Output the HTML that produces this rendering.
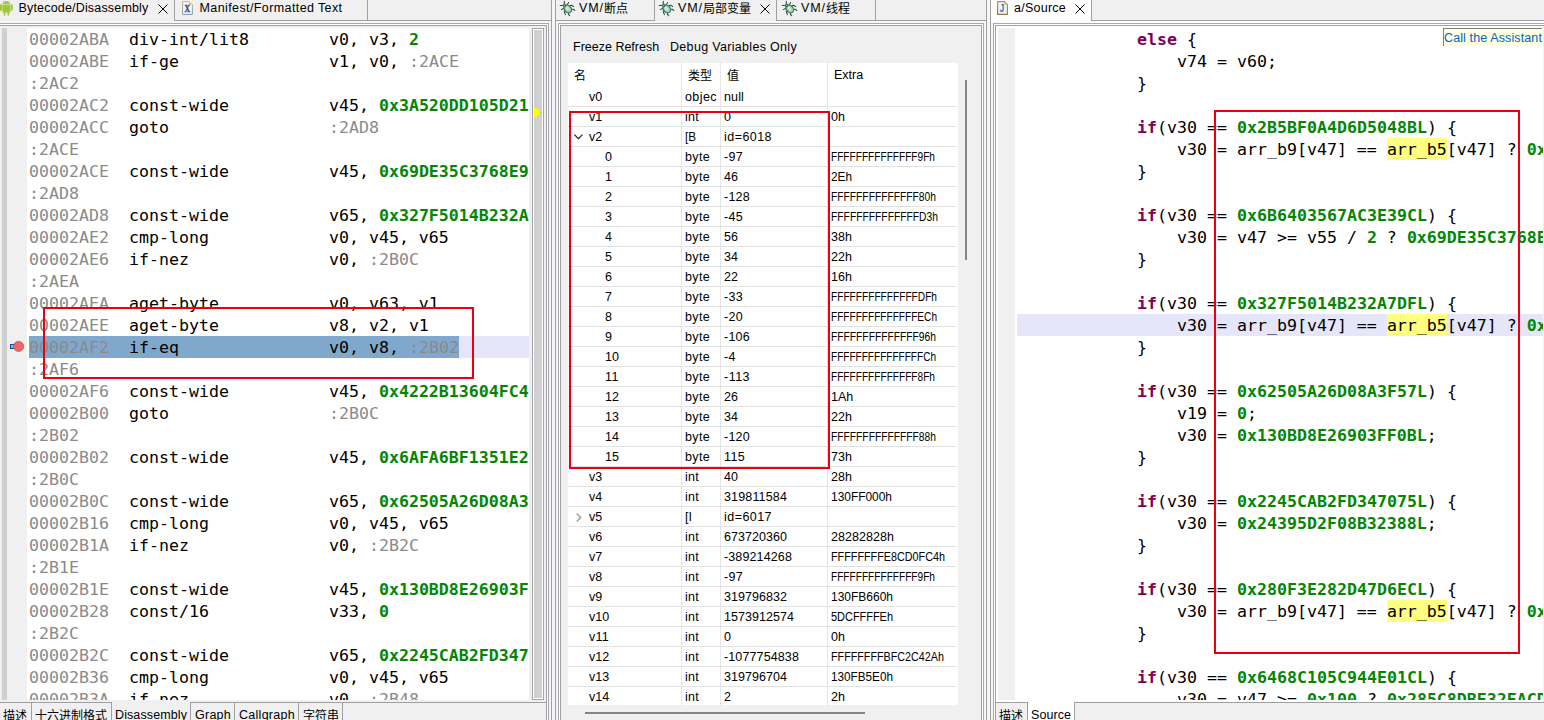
<!DOCTYPE html>
<html><head><meta charset="utf-8"><title>Debugger</title><style>
html,body{margin:0;padding:0}
body{width:1544px;height:720px;overflow:hidden;background:#f0f0f0;position:relative;font-family:"Liberation Sans","Noto Sans CJK SC",sans-serif;font-size:12.5px;color:#000}
div,span{box-sizing:border-box}
.t{position:absolute;white-space:pre;line-height:16px;height:16px}
.code{position:absolute;overflow:hidden;font-family:"DejaVu Sans Mono","Liberation Mono",monospace;font-size:16.6px;letter-spacing:0.006px;white-space:pre}
.ln{position:absolute;left:0;height:22px;line-height:24px;white-space:pre}
.ln span{display:inline-block;height:22px;vertical-align:top}
.cj{font-size:12px;position:relative;top:0.6px}
.g{color:#8a8a8a}
.n{color:#038603;font-weight:bold}
.k{color:#7f0055;font-weight:bold}
.y{background:#ffff80}
.cell{position:absolute;white-space:pre;line-height:20px;height:20px}
</style></head><body>
<div style="position:absolute;left:549px;top:21px;width:9px;height:699px;background:#f5f5f5;"></div>
<div style="position:absolute;left:552px;top:0px;width:3px;height:720px;background:#f5f5f5;"></div>
<div style="position:absolute;left:551px;top:0px;width:1px;height:720px;background:#a0a0a0;"></div>
<div style="position:absolute;left:555px;top:0px;width:1px;height:720px;background:#a0a0a0;"></div>
<div style="position:absolute;left:984px;top:21px;width:9px;height:699px;background:#f5f5f5;"></div>
<div style="position:absolute;left:987px;top:0px;width:3px;height:720px;background:#f5f5f5;"></div>
<div style="position:absolute;left:986px;top:0px;width:1px;height:720px;background:#a0a0a0;"></div>
<div style="position:absolute;left:990px;top:0px;width:1px;height:720px;background:#a0a0a0;"></div>
<div style="position:absolute;left:174px;top:0px;width:1px;height:21px;background:#a0a0a0;"></div>
<div style="position:absolute;left:367px;top:0px;width:1px;height:21px;background:#a0a0a0;"></div>
<div style="position:absolute;left:174px;top:20px;width:377px;height:1px;background:#a0a0a0;"></div>
<div style="position:absolute;left:0px;top:21px;width:551px;height:2px;background:#f6f6f6;"></div>
<div style="position:absolute;left:0px;top:23px;width:549px;height:1px;background:#a7a9b1;"></div>
<div style="position:absolute;left:548px;top:23px;width:1px;height:697px;background:#a7a9b1;"></div>
<div style="position:absolute;left:0px;top:24px;width:548px;height:1px;background:#fff;"></div>
<div style="position:absolute;left:547px;top:24px;width:1px;height:696px;background:#fff;"></div>
<div style="position:absolute;left:0px;top:25px;width:547px;height:1px;background:#a0a0a0;"></div>
<div style="position:absolute;left:546px;top:25px;width:1px;height:695px;background:#a0a0a0;"></div>
<div style="position:absolute;left:2px;top:28px;width:5px;height:672px;background:#d0d0d0;"></div>
<div style="position:absolute;left:27px;top:28px;width:502px;height:672px;background:#fff;"></div>
<div style="position:absolute;left:532px;top:28px;width:12px;height:672px;background:#fff;border:1px solid #a3a3ab"></div>
<div style="position:absolute;left:534px;top:30px;width:8px;height:668px;background:#d0d0d0;"></div>
<svg style="position:absolute;left:534px;top:108px" width="8" height="9" viewBox="0 0 8 9"><polygon points="0,0 2,0 7.5,4.5 2,9 0,9" fill="#ffff00"/><rect x="6" y="4" width="1" height="1" fill="#40e020"/></svg>
<div style="position:absolute;left:0px;top:702px;width:112px;height:1px;background:#a0a0a0;"></div>
<div style="position:absolute;left:190px;top:702px;width:357px;height:1px;background:#a0a0a0;"></div>
<div style="position:absolute;left:31px;top:702px;width:1px;height:18px;background:#a0a0a0;"></div>
<div style="position:absolute;left:111px;top:702px;width:1px;height:18px;background:#a0a0a0;"></div>
<div style="position:absolute;left:190px;top:702px;width:1px;height:18px;background:#a0a0a0;"></div>
<div style="position:absolute;left:234px;top:702px;width:1px;height:18px;background:#a0a0a0;"></div>
<div style="position:absolute;left:298px;top:702px;width:1px;height:18px;background:#a0a0a0;"></div>
<div style="position:absolute;left:342px;top:702px;width:1px;height:18px;background:#a0a0a0;"></div>
<div style="position:absolute;left:654px;top:0px;width:1px;height:21px;background:#a0a0a0;"></div>
<div style="position:absolute;left:776px;top:0px;width:1px;height:21px;background:#a0a0a0;"></div>
<div style="position:absolute;left:875px;top:0px;width:1px;height:21px;background:#a0a0a0;"></div>
<div style="position:absolute;left:556px;top:20px;width:99px;height:1px;background:#a0a0a0;"></div>
<div style="position:absolute;left:776px;top:20px;width:210px;height:1px;background:#a0a0a0;"></div>
<div style="position:absolute;left:556px;top:21px;width:430px;height:2px;background:#f6f6f6;"></div>
<div style="position:absolute;left:558px;top:23px;width:426px;height:1px;background:#a7a9b1;"></div>
<div style="position:absolute;left:558px;top:23px;width:1px;height:697px;background:#a7a9b1;"></div>
<div style="position:absolute;left:983px;top:23px;width:1px;height:697px;background:#a7a9b1;"></div>
<div style="position:absolute;left:559px;top:24px;width:424px;height:1px;background:#fff;"></div>
<div style="position:absolute;left:559px;top:24px;width:1px;height:696px;background:#fff;"></div>
<div style="position:absolute;left:982px;top:24px;width:1px;height:696px;background:#fff;"></div>
<div style="position:absolute;left:560px;top:25px;width:422px;height:1px;background:#a0a0a0;"></div>
<div style="position:absolute;left:560px;top:25px;width:1px;height:695px;background:#a0a0a0;"></div>
<div style="position:absolute;left:981px;top:25px;width:1px;height:695px;background:#a0a0a0;"></div>
<div style="position:absolute;left:568px;top:63px;width:390px;height:642px;background:#fff;"></div>
<div style="position:absolute;left:681px;top:63px;width:1px;height:642px;background:#e6e6e6;"></div>
<div style="position:absolute;left:720px;top:63px;width:1px;height:642px;background:#e6e6e6;"></div>
<div style="position:absolute;left:827px;top:63px;width:1px;height:642px;background:#e6e6e6;"></div>
<div style="position:absolute;left:568px;top:106px;width:389px;height:1px;background:#e3e3e3;"></div>
<div style="position:absolute;left:568px;top:126px;width:389px;height:1px;background:#e3e3e3;"></div>
<div style="position:absolute;left:568px;top:146px;width:389px;height:1px;background:#e3e3e3;"></div>
<div style="position:absolute;left:568px;top:166px;width:389px;height:1px;background:#e3e3e3;"></div>
<div style="position:absolute;left:568px;top:186px;width:389px;height:1px;background:#e3e3e3;"></div>
<div style="position:absolute;left:568px;top:206px;width:389px;height:1px;background:#e3e3e3;"></div>
<div style="position:absolute;left:568px;top:226px;width:389px;height:1px;background:#e3e3e3;"></div>
<div style="position:absolute;left:568px;top:246px;width:389px;height:1px;background:#e3e3e3;"></div>
<div style="position:absolute;left:568px;top:266px;width:389px;height:1px;background:#e3e3e3;"></div>
<div style="position:absolute;left:568px;top:286px;width:389px;height:1px;background:#e3e3e3;"></div>
<div style="position:absolute;left:568px;top:306px;width:389px;height:1px;background:#e3e3e3;"></div>
<div style="position:absolute;left:568px;top:326px;width:389px;height:1px;background:#e3e3e3;"></div>
<div style="position:absolute;left:568px;top:346px;width:389px;height:1px;background:#e3e3e3;"></div>
<div style="position:absolute;left:568px;top:366px;width:389px;height:1px;background:#e3e3e3;"></div>
<div style="position:absolute;left:568px;top:386px;width:389px;height:1px;background:#e3e3e3;"></div>
<div style="position:absolute;left:568px;top:406px;width:389px;height:1px;background:#e3e3e3;"></div>
<div style="position:absolute;left:568px;top:426px;width:389px;height:1px;background:#e3e3e3;"></div>
<div style="position:absolute;left:568px;top:446px;width:389px;height:1px;background:#e3e3e3;"></div>
<div style="position:absolute;left:568px;top:466px;width:389px;height:1px;background:#e3e3e3;"></div>
<div style="position:absolute;left:568px;top:486px;width:389px;height:1px;background:#e3e3e3;"></div>
<div style="position:absolute;left:568px;top:506px;width:389px;height:1px;background:#e3e3e3;"></div>
<div style="position:absolute;left:568px;top:526px;width:389px;height:1px;background:#e3e3e3;"></div>
<div style="position:absolute;left:568px;top:546px;width:389px;height:1px;background:#e3e3e3;"></div>
<div style="position:absolute;left:568px;top:566px;width:389px;height:1px;background:#e3e3e3;"></div>
<div style="position:absolute;left:568px;top:586px;width:389px;height:1px;background:#e3e3e3;"></div>
<div style="position:absolute;left:568px;top:606px;width:389px;height:1px;background:#e3e3e3;"></div>
<div style="position:absolute;left:568px;top:626px;width:389px;height:1px;background:#e3e3e3;"></div>
<div style="position:absolute;left:568px;top:646px;width:389px;height:1px;background:#e3e3e3;"></div>
<div style="position:absolute;left:568px;top:666px;width:389px;height:1px;background:#e3e3e3;"></div>
<div style="position:absolute;left:568px;top:686px;width:389px;height:1px;background:#e3e3e3;"></div>
<div style="position:absolute;left:965px;top:80px;width:2px;height:180px;background:#858585;"></div>
<div style="position:absolute;left:585px;top:712px;width:280px;height:2px;background:#858585;"></div>
<div style="position:absolute;left:991px;top:0px;width:100px;height:23px;background:#fff;"></div>
<div style="position:absolute;left:1091px;top:0px;width:1px;height:21px;background:#a0a0a0;"></div>
<div style="position:absolute;left:1091px;top:20px;width:453px;height:1px;background:#a0a0a0;"></div>
<div style="position:absolute;left:991px;top:21px;width:553px;height:2px;background:#fff;"></div>
<div style="position:absolute;left:993px;top:23px;width:551px;height:1px;background:#a7a9b1;"></div>
<div style="position:absolute;left:993px;top:23px;width:1px;height:697px;background:#a7a9b1;"></div>
<div style="position:absolute;left:994px;top:24px;width:550px;height:1px;background:#fff;"></div>
<div style="position:absolute;left:994px;top:24px;width:1px;height:696px;background:#fff;"></div>
<div style="position:absolute;left:995px;top:25px;width:549px;height:1px;background:#a0a0a0;"></div>
<div style="position:absolute;left:995px;top:25px;width:1px;height:695px;background:#a0a0a0;"></div>
<div style="position:absolute;left:996px;top:26px;width:547px;height:676px;background:#fff;"></div>
<div style="position:absolute;left:1543px;top:26px;width:1px;height:676px;background:#f2f2f2;"></div>
<div style="position:absolute;left:998px;top:28px;width:17px;height:672px;background:#f0f0f0;"></div>
<div style="position:absolute;left:995px;top:702px;width:33px;height:1px;background:#a0a0a0;"></div>
<div style="position:absolute;left:1027px;top:702px;width:1px;height:18px;background:#a0a0a0;"></div>
<div style="position:absolute;left:1028px;top:702px;width:46px;height:18px;background:#fff;"></div>
<div style="position:absolute;left:1074px;top:702px;width:1px;height:18px;background:#a0a0a0;"></div>
<div style="position:absolute;left:1074px;top:702px;width:470px;height:1px;background:#a0a0a0;"></div>
<div class="code" style="left:29px;top:28px;width:500px;height:672px">
<div class="ln" style="top:0px"><span class="g">00002ABA  </span><span>div-int/lit8        </span><span>v0, v3, </span><span class="n">2</span></div>
<div class="ln" style="top:22px"><span class="g">00002ABE  </span><span>if-ge               </span><span>v1, v0, </span><span class="g">:2ACE</span></div>
<div class="ln" style="top:44px"><span class="g">:2AC2</span></div>
<div class="ln" style="top:66px"><span class="g">00002AC2  </span><span>const-wide          </span><span>v45, </span><span class="n">0x3A520DD105D21</span></div>
<div class="ln" style="top:88px"><span class="g">00002ACC  </span><span>goto                </span><span class="g">:2AD8</span></div>
<div class="ln" style="top:110px"><span class="g">:2ACE</span></div>
<div class="ln" style="top:132px"><span class="g">00002ACE  </span><span>const-wide          </span><span>v45, </span><span class="n">0x69DE35C3768E9</span></div>
<div class="ln" style="top:154px"><span class="g">:2AD8</span></div>
<div class="ln" style="top:176px"><span class="g">00002AD8  </span><span>const-wide          </span><span>v65, </span><span class="n">0x327F5014B232A</span></div>
<div class="ln" style="top:198px"><span class="g">00002AE2  </span><span>cmp-long            </span><span>v0, v45, v65</span></div>
<div class="ln" style="top:220px"><span class="g">00002AE6  </span><span>if-nez              </span><span>v0, </span><span class="g">:2B0C</span></div>
<div class="ln" style="top:242px"><span class="g">:2AEA</span></div>
<div class="ln" style="top:264px"><span class="g">00002AEA  </span><span>aget-byte           </span><span>v0, v63, v1</span></div>
<div class="ln" style="top:286px"><span class="g">00002AEE  </span><span>aget-byte           </span><span>v8, v2, v1</span></div>
<div style="position:absolute;left:0;top:308px;width:430px;height:22px;background:#80a8cc"></div>
<div style="position:absolute;left:430px;top:308px;width:70px;height:22px;background:#e6e6fa"></div>
<div class="ln" style="top:308px"><span class="g">00002AF2  </span><span>if-eq               </span><span>v0, v8, </span><span class="g">:2B02</span></div>
<div class="ln" style="top:330px"><span class="g">:2AF6</span></div>
<div class="ln" style="top:352px"><span class="g">00002AF6  </span><span>const-wide          </span><span>v45, </span><span class="n">0x4222B13604FC4</span></div>
<div class="ln" style="top:374px"><span class="g">00002B00  </span><span>goto                </span><span class="g">:2B0C</span></div>
<div class="ln" style="top:396px"><span class="g">:2B02</span></div>
<div class="ln" style="top:418px"><span class="g">00002B02  </span><span>const-wide          </span><span>v45, </span><span class="n">0x6AFA6BF1351E2</span></div>
<div class="ln" style="top:440px"><span class="g">:2B0C</span></div>
<div class="ln" style="top:462px"><span class="g">00002B0C  </span><span>const-wide          </span><span>v65, </span><span class="n">0x62505A26D08A3</span></div>
<div class="ln" style="top:484px"><span class="g">00002B16  </span><span>cmp-long            </span><span>v0, v45, v65</span></div>
<div class="ln" style="top:506px"><span class="g">00002B1A  </span><span>if-nez              </span><span>v0, </span><span class="g">:2B2C</span></div>
<div class="ln" style="top:528px"><span class="g">:2B1E</span></div>
<div class="ln" style="top:550px"><span class="g">00002B1E  </span><span>const-wide          </span><span>v45, </span><span class="n">0x130BD8E26903F</span></div>
<div class="ln" style="top:572px"><span class="g">00002B28  </span><span>const/16            </span><span>v33, </span><span class="n">0</span></div>
<div class="ln" style="top:594px"><span class="g">:2B2C</span></div>
<div class="ln" style="top:616px"><span class="g">00002B2C  </span><span>const-wide          </span><span>v65, </span><span class="n">0x2245CAB2FD347</span></div>
<div class="ln" style="top:638px"><span class="g">00002B36  </span><span>cmp-long            </span><span>v0, v45, v65</span></div>
<div class="ln" style="top:660px"><span class="g">00002B3A  </span><span>if-nez              </span><span>v0, </span><span class="g">:2B48</span></div>
</div>
<svg style="position:absolute;left:9px;top:340px" width="17" height="14" viewBox="0 0 17 14"><rect x="1.5" y="4.5" width="4" height="4" fill="#8ab4d8" stroke="#0b4f99" stroke-width="1"/><circle cx="9.6" cy="6.4" r="5.0" fill="#e8686c" stroke="#d8434c" stroke-width="0.8"/></svg>
<div class="code" style="left:1017px;top:28px;width:526px;height:672px">
<div class="ln" style="top:0px"><span>            </span><span class="k">else</span><span> {</span></div>
<div class="ln" style="top:22px"><span>                v74 = v60;</span></div>
<div class="ln" style="top:44px"><span>            }</span></div>
<div class="ln" style="top:66px"></div>
<div class="ln" style="top:88px"><span>            </span><span class="k">if</span><span>(v30 == </span><span class="n">0x2B5BF0A4D6D5048BL</span><span>) {</span></div>
<div class="ln" style="top:110px"><span>                v30 = arr_b9[v47] == </span><span class="y">arr_b5</span><span>[v47] ? </span><span class="n">0x2245CAB2FD347075L</span></div>
<div class="ln" style="top:132px"><span>            }</span></div>
<div class="ln" style="top:154px"></div>
<div class="ln" style="top:176px"><span>            </span><span class="k">if</span><span>(v30 == </span><span class="n">0x6B6403567AC3E39CL</span><span>) {</span></div>
<div class="ln" style="top:198px"><span>                v30 = v47 &gt;= v55 / </span><span class="n">2</span><span> ? </span><span class="n">0x69DE35C3768E9B1BL</span></div>
<div class="ln" style="top:220px"><span>            }</span></div>
<div class="ln" style="top:242px"></div>
<div class="ln" style="top:264px"><span>            </span><span class="k">if</span><span>(v30 == </span><span class="n">0x327F5014B232A7DFL</span><span>) {</span></div>
<div style="position:absolute;left:0;top:286px;width:526px;height:22px;background:#e6e6fa"></div>
<div class="ln" style="top:286px"><span>                v30 = arr_b9[v47] == </span><span class="y">arr_b5</span><span>[v47] ? </span><span class="n">0x2245CAB2FD347075L</span></div>
<div class="ln" style="top:308px"><span>            }</span></div>
<div class="ln" style="top:330px"></div>
<div class="ln" style="top:352px"><span>            </span><span class="k">if</span><span>(v30 == </span><span class="n">0x62505A26D08A3F57L</span><span>) {</span></div>
<div class="ln" style="top:374px"><span>                v19 = </span><span class="n">0</span><span>;</span></div>
<div class="ln" style="top:396px"><span>                v30 = </span><span class="n">0x130BD8E26903FF0BL</span><span>;</span></div>
<div class="ln" style="top:418px"><span>            }</span></div>
<div class="ln" style="top:440px"></div>
<div class="ln" style="top:462px"><span>            </span><span class="k">if</span><span>(v30 == </span><span class="n">0x2245CAB2FD347075L</span><span>) {</span></div>
<div class="ln" style="top:484px"><span>                v30 = </span><span class="n">0x24395D2F08B32388L</span><span>;</span></div>
<div class="ln" style="top:506px"><span>            }</span></div>
<div class="ln" style="top:528px"></div>
<div class="ln" style="top:550px"><span>            </span><span class="k">if</span><span>(v30 == </span><span class="n">0x280F3E282D47D6ECL</span><span>) {</span></div>
<div class="ln" style="top:572px"><span>                v30 = arr_b9[v47] == </span><span class="y">arr_b5</span><span>[v47] ? </span><span class="n">0x2245CAB2FD347075L</span></div>
<div class="ln" style="top:594px"><span>            }</span></div>
<div class="ln" style="top:616px"></div>
<div class="ln" style="top:638px"><span>            </span><span class="k">if</span><span>(v30 == </span><span class="n">0x6468C105C944E01CL</span><span>) {</span></div>
<div class="ln" style="top:660px"><span>                v30 = v47 &gt;= </span><span class="n">0x100</span><span> ? </span><span class="n">0x285C8DBE32EACD6AL</span></div>
</div>
<div style="position:absolute;left:1443px;top:28px;width:99px;height:18px;background:#ffffe1;border-left:1px solid #808080;border-top:1px solid #808080"></div>
<div class="t" style="left:1444px;top:30px;letter-spacing:0.117px;color:#0563c9;">Call the Assistant</div>
<div style="position:absolute;left:43px;top:307px;width:431px;height:72px;border:2px solid #ea0010;z-index:5"></div>
<div style="position:absolute;left:569px;top:111px;width:261px;height:358px;border:2px solid #ea0010;z-index:5"></div>
<div style="position:absolute;left:1214px;top:110px;width:306px;height:544px;border:2px solid #ea0010;z-index:5"></div>
<div class="t" style="left:18.5px;top:0px;letter-spacing:0.177px;">Bytecode/Disassembly</div>
<div class="t" style="left:199.5px;top:0px;letter-spacing:0.397px;">Manifest/Formatted Text</div>
<div class="t" style="left:579px;top:0px;"><span style="letter-spacing:0.922px;">VM/</span><span class="cj">断点</span></div>
<div class="t" style="left:678px;top:0px;"><span style="letter-spacing:0.922px;">VM/</span><span class="cj">局部变量</span></div>
<div class="t" style="left:801px;top:0px;"><span style="letter-spacing:0.922px;">VM/</span><span class="cj">线程</span></div>
<div class="t" style="left:1014px;top:0px;letter-spacing:0.246px;">a/Source</div>
<svg style="position:absolute;left:158px;top:4px" width="10" height="10" viewBox="0 0 10 10"><path d="M0.5 0.5 L9.5 9.5 M9.5 0.5 L0.5 9.5" stroke="#000" stroke-width="1" fill="none"/></svg>
<svg style="position:absolute;left:760px;top:4px" width="10" height="10" viewBox="0 0 10 10"><path d="M0.5 0.5 L9.5 9.5 M9.5 0.5 L0.5 9.5" stroke="#000" stroke-width="1" fill="none"/></svg>
<svg style="position:absolute;left:1075px;top:4px" width="10" height="10" viewBox="0 0 10 10"><path d="M0.5 0.5 L9.5 9.5 M9.5 0.5 L0.5 9.5" stroke="#000" stroke-width="1" fill="none"/></svg>
<div class="t" style="left:3px;top:707px;"><span class="cj">描述</span></div>
<div class="t" style="left:35px;top:707px;"><span class="cj">十六进制格式</span></div>
<div class="t" style="left:115px;top:707px;letter-spacing:0.104px;">Disassembly</div>
<div class="t" style="left:195px;top:707px;letter-spacing:0.250px;">Graph</div>
<div class="t" style="left:239px;top:707px;letter-spacing:0.276px;">Callgraph</div>
<div class="t" style="left:303px;top:707px;"><span class="cj">字符串</span></div>
<div class="t" style="left:999px;top:707px;"><span class="cj">描述</span></div>
<div class="t" style="left:1031px;top:707px;letter-spacing:0.065px;">Source</div>
<div class="t" style="left:573px;top:39px;">Freeze Refresh</div>
<div class="t" style="left:670px;top:39px;letter-spacing:0.316px;">Debug Variables Only</div>
<svg style="position:absolute;left:0;top:0" width="14" height="17" viewBox="0 0 14 17">
<g fill="#a4c639"><path d="M2.5 4.35 A3.9 3.45 0 0 1 10.3 4.35 Z"/><path d="M2.4 4.8 H10.4 V11.6 A0.9 0.9 0 0 1 9.5 12.5 H3.3 A0.9 0.9 0 0 1 2.4 11.6 Z"/>
<rect x="-1" y="4.3" width="3.05" height="6.45" rx="0.95"/><rect x="10.75" y="4.2" width="2" height="6.55" rx="0.95"/>
<rect x="3.75" y="11.5" width="1.65" height="4.25" rx="0.8"/><rect x="7.5" y="11.5" width="1.65" height="4.25" rx="0.8"/>
<path d="M3.3 0.1 L4 1.4 M9.5 0.1 L8.8 1.4" stroke="#a4c639" stroke-width="0.35" stroke-opacity="0.6"/></g>
<circle cx="4.5" cy="2.6" r="0.45" fill="#e4efc0"/><circle cx="8.4" cy="2.6" r="0.45" fill="#e4efc0"/></svg>
<svg style="position:absolute;left:182px;top:1px" width="12" height="15" viewBox="0 0 12 15">
<defs><linearGradient id="mg" x1="0" y1="0" x2="0" y2="1"><stop offset="0" stop-color="#c9b97c"/><stop offset="1" stop-color="#8696b8"/></linearGradient></defs>
<path d="M0.6 0.6 H7.2 L10.4 3.8 V13.4 H0.6 Z" fill="#f3f6fd" stroke="url(#mg)" stroke-width="1"/>
<path d="M7.2 0.9 L10.1 3.8 H7.2 Z" fill="#e2bc66"/>
<text x="2.6" y="10.8" font-family="Liberation Serif,serif" font-weight="bold" font-size="10" textLength="5.6" lengthAdjust="spacingAndGlyphs" fill="#2a4a72" stroke="#2a4a72" stroke-width="0.3">X</text></svg>
<svg style="position:absolute;left:997px;top:1px" width="12" height="15" viewBox="0 0 12 15">
<defs><linearGradient id="jg" x1="0" y1="0" x2="0" y2="1"><stop offset="0" stop-color="#b8922f"/><stop offset="1" stop-color="#8d7a38"/></linearGradient></defs>
<path d="M0.6 0.6 H7.4 L10.4 3.6 V13.4 H0.6 Z" fill="#eef3fb" stroke="url(#jg)" stroke-width="1.1"/>
<path d="M7.4 0.9 L10.1 3.6 H7.4 Z" fill="#e0b860"/>
<text x="2.7" y="10.9" font-family="Liberation Sans,sans-serif" font-weight="bold" font-size="10.5" textLength="4.4" lengthAdjust="spacingAndGlyphs" fill="#2e6da4">J</text></svg>
<svg style="position:absolute;left:556px;top:0px" width="20" height="17" viewBox="0 0 20 17">
<g stroke="#2d4d3d" stroke-width="1.05" fill="none" stroke-linecap="round"><path d="M8.3 4.6 V1.2 M11.4 4.7 L12.6 2.5 M7 5.4 H4.2 M7.8 8.3 L5.3 9.6 M13.9 5.4 L15.6 5.3 L17.6 6.5 M16 9.3 L17.4 9.3 L18.8 10.5 M8.3 11.1 L8.6 12.8 L9.5 14.6 M12.5 13 V14.5 L13.7 15.6"/></g>
<ellipse cx="11.7" cy="8.9" rx="3.3" ry="4.4" transform="rotate(-42 11.7 8.9)" fill="#a9d494" stroke="#2a6a80" stroke-width="1.1"/>
<ellipse cx="11.2" cy="8.2" rx="1.5" ry="2.6" transform="rotate(-42 11.2 8.2)" fill="#d4ecc4"/>
<circle cx="8.7" cy="5.5" r="1.5" fill="#3c8a50" stroke="#2a6a80" stroke-width="0.9"/>
<circle cx="8.4" cy="5.2" r="0.5" fill="#bfe6b0"/></svg>
<svg style="position:absolute;left:655px;top:0px" width="20" height="17" viewBox="0 0 20 17">
<g stroke="#2d4d3d" stroke-width="1.05" fill="none" stroke-linecap="round"><path d="M8.3 4.6 V1.2 M11.4 4.7 L12.6 2.5 M7 5.4 H4.2 M7.8 8.3 L5.3 9.6 M13.9 5.4 L15.6 5.3 L17.6 6.5 M16 9.3 L17.4 9.3 L18.8 10.5 M8.3 11.1 L8.6 12.8 L9.5 14.6 M12.5 13 V14.5 L13.7 15.6"/></g>
<ellipse cx="11.7" cy="8.9" rx="3.3" ry="4.4" transform="rotate(-42 11.7 8.9)" fill="#a9d494" stroke="#2a6a80" stroke-width="1.1"/>
<ellipse cx="11.2" cy="8.2" rx="1.5" ry="2.6" transform="rotate(-42 11.2 8.2)" fill="#d4ecc4"/>
<circle cx="8.7" cy="5.5" r="1.5" fill="#3c8a50" stroke="#2a6a80" stroke-width="0.9"/>
<circle cx="8.4" cy="5.2" r="0.5" fill="#bfe6b0"/></svg>
<svg style="position:absolute;left:778px;top:0px" width="20" height="17" viewBox="0 0 20 17">
<g stroke="#2d4d3d" stroke-width="1.05" fill="none" stroke-linecap="round"><path d="M8.3 4.6 V1.2 M11.4 4.7 L12.6 2.5 M7 5.4 H4.2 M7.8 8.3 L5.3 9.6 M13.9 5.4 L15.6 5.3 L17.6 6.5 M16 9.3 L17.4 9.3 L18.8 10.5 M8.3 11.1 L8.6 12.8 L9.5 14.6 M12.5 13 V14.5 L13.7 15.6"/></g>
<ellipse cx="11.7" cy="8.9" rx="3.3" ry="4.4" transform="rotate(-42 11.7 8.9)" fill="#a9d494" stroke="#2a6a80" stroke-width="1.1"/>
<ellipse cx="11.2" cy="8.2" rx="1.5" ry="2.6" transform="rotate(-42 11.2 8.2)" fill="#d4ecc4"/>
<circle cx="8.7" cy="5.5" r="1.5" fill="#3c8a50" stroke="#2a6a80" stroke-width="0.9"/>
<circle cx="8.4" cy="5.2" r="0.5" fill="#bfe6b0"/></svg>
<div class="cell" style="left:574px;top:65px;"><span class="cj">名</span></div>
<div class="cell" style="left:688px;top:65px;"><span class="cj">类型</span></div>
<div class="cell" style="left:727px;top:65px;"><span class="cj">值</span></div>
<div class="cell" style="left:834px;top:65px;">Extra</div>
<div class="cell" style="left:589px;top:87px;">v0</div>
<div class="cell" style="left:685px;top:87px;letter-spacing:0.422px;">objec</div>
<div class="cell" style="left:724px;top:87px;letter-spacing:0.133px;">null</div>
<div class="cell" style="left:589px;top:107px;">v1</div>
<div class="cell" style="left:685px;top:107px;letter-spacing:0.266px;">int</div>
<div class="cell" style="left:724px;top:107px;">0</div>
<div class="cell" style="left:831px;top:107px;">0h</div>
<div class="cell" style="left:589px;top:127px;">v2</div>
<div class="cell" style="left:685px;top:127px;transform:scaleX(0.9312);transform-origin:0 0;">[B</div>
<div class="cell" style="left:724px;top:127px;letter-spacing:0.451px;">id=6018</div>
<div class="cell" style="left:605px;top:147px;">0</div>
<div class="cell" style="left:685px;top:147px;letter-spacing:0.340px;">byte</div>
<div class="cell" style="left:724px;top:147px;letter-spacing:0.307px;">-97</div>
<div class="cell" style="left:831px;top:147px;transform:scaleX(0.8097);transform-origin:0 0;">FFFFFFFFFFFFFF9Fh</div>
<div class="cell" style="left:605px;top:167px;">1</div>
<div class="cell" style="left:685px;top:167px;letter-spacing:0.340px;">byte</div>
<div class="cell" style="left:724px;top:167px;">46</div>
<div class="cell" style="left:831px;top:167px;transform:scaleX(0.9438);transform-origin:0 0;">2Eh</div>
<div class="cell" style="left:605px;top:187px;">2</div>
<div class="cell" style="left:685px;top:187px;letter-spacing:0.340px;">byte</div>
<div class="cell" style="left:724px;top:187px;letter-spacing:0.242px;">-128</div>
<div class="cell" style="left:831px;top:187px;transform:scaleX(0.8218);transform-origin:0 0;">FFFFFFFFFFFFFF80h</div>
<div class="cell" style="left:605px;top:207px;">3</div>
<div class="cell" style="left:685px;top:207px;letter-spacing:0.340px;">byte</div>
<div class="cell" style="left:724px;top:207px;letter-spacing:0.307px;">-45</div>
<div class="cell" style="left:831px;top:207px;transform:scaleX(0.8242);transform-origin:0 0;">FFFFFFFFFFFFFFD3h</div>
<div class="cell" style="left:605px;top:227px;">4</div>
<div class="cell" style="left:685px;top:227px;letter-spacing:0.340px;">byte</div>
<div class="cell" style="left:724px;top:227px;">56</div>
<div class="cell" style="left:831px;top:227px;">38h</div>
<div class="cell" style="left:605px;top:247px;">5</div>
<div class="cell" style="left:685px;top:247px;letter-spacing:0.340px;">byte</div>
<div class="cell" style="left:724px;top:247px;">34</div>
<div class="cell" style="left:831px;top:247px;">22h</div>
<div class="cell" style="left:605px;top:267px;">6</div>
<div class="cell" style="left:685px;top:267px;letter-spacing:0.340px;">byte</div>
<div class="cell" style="left:724px;top:267px;">22</div>
<div class="cell" style="left:831px;top:267px;">16h</div>
<div class="cell" style="left:605px;top:287px;">7</div>
<div class="cell" style="left:685px;top:287px;letter-spacing:0.340px;">byte</div>
<div class="cell" style="left:724px;top:287px;letter-spacing:0.307px;">-33</div>
<div class="cell" style="left:831px;top:287px;transform:scaleX(0.8122);transform-origin:0 0;">FFFFFFFFFFFFFFDFh</div>
<div class="cell" style="left:605px;top:307px;">8</div>
<div class="cell" style="left:685px;top:307px;letter-spacing:0.340px;">byte</div>
<div class="cell" style="left:724px;top:307px;letter-spacing:0.307px;">-20</div>
<div class="cell" style="left:831px;top:307px;transform:scaleX(0.8078);transform-origin:0 0;">FFFFFFFFFFFFFFECh</div>
<div class="cell" style="left:605px;top:327px;">9</div>
<div class="cell" style="left:685px;top:327px;letter-spacing:0.340px;">byte</div>
<div class="cell" style="left:724px;top:327px;letter-spacing:0.242px;">-106</div>
<div class="cell" style="left:831px;top:327px;transform:scaleX(0.8218);transform-origin:0 0;">FFFFFFFFFFFFFF96h</div>
<div class="cell" style="left:605px;top:347px;">10</div>
<div class="cell" style="left:685px;top:347px;letter-spacing:0.340px;">byte</div>
<div class="cell" style="left:724px;top:347px;letter-spacing:0.438px;">-4</div>
<div class="cell" style="left:831px;top:347px;transform:scaleX(0.8045);transform-origin:0 0;">FFFFFFFFFFFFFFFCh</div>
<div class="cell" style="left:605px;top:367px;letter-spacing:0.508px;">11</div>
<div class="cell" style="left:685px;top:367px;letter-spacing:0.340px;">byte</div>
<div class="cell" style="left:724px;top:367px;letter-spacing:0.477px;">-113</div>
<div class="cell" style="left:831px;top:367px;transform:scaleX(0.8097);transform-origin:0 0;">FFFFFFFFFFFFFF8Fh</div>
<div class="cell" style="left:605px;top:387px;">12</div>
<div class="cell" style="left:685px;top:387px;letter-spacing:0.340px;">byte</div>
<div class="cell" style="left:724px;top:387px;">26</div>
<div class="cell" style="left:831px;top:387px;">1Ah</div>
<div class="cell" style="left:605px;top:407px;">13</div>
<div class="cell" style="left:685px;top:407px;letter-spacing:0.340px;">byte</div>
<div class="cell" style="left:724px;top:407px;">34</div>
<div class="cell" style="left:831px;top:407px;">22h</div>
<div class="cell" style="left:605px;top:427px;">14</div>
<div class="cell" style="left:685px;top:427px;letter-spacing:0.340px;">byte</div>
<div class="cell" style="left:724px;top:427px;letter-spacing:0.242px;">-120</div>
<div class="cell" style="left:831px;top:427px;transform:scaleX(0.8218);transform-origin:0 0;">FFFFFFFFFFFFFF88h</div>
<div class="cell" style="left:605px;top:447px;">15</div>
<div class="cell" style="left:685px;top:447px;letter-spacing:0.340px;">byte</div>
<div class="cell" style="left:724px;top:447px;letter-spacing:0.354px;">115</div>
<div class="cell" style="left:831px;top:447px;">73h</div>
<div class="cell" style="left:589px;top:467px;">v3</div>
<div class="cell" style="left:685px;top:467px;letter-spacing:0.266px;">int</div>
<div class="cell" style="left:724px;top:467px;">40</div>
<div class="cell" style="left:831px;top:467px;">28h</div>
<div class="cell" style="left:589px;top:487px;">v4</div>
<div class="cell" style="left:685px;top:487px;letter-spacing:0.266px;">int</div>
<div class="cell" style="left:724px;top:487px;letter-spacing:0.151px;">319811584</div>
<div class="cell" style="left:831px;top:487px;transform:scaleX(0.9541);transform-origin:0 0;">130FF000h</div>
<div class="cell" style="left:589px;top:507px;">v5</div>
<div class="cell" style="left:685px;top:507px;">[I</div>
<div class="cell" style="left:724px;top:507px;letter-spacing:0.451px;">id=6017</div>
<div class="cell" style="left:589px;top:527px;">v6</div>
<div class="cell" style="left:685px;top:527px;letter-spacing:0.266px;">int</div>
<div class="cell" style="left:724px;top:527px;letter-spacing:0.047px;">673720360</div>
<div class="cell" style="left:831px;top:527px;letter-spacing:0.047px;">28282828h</div>
<div class="cell" style="left:589px;top:547px;">v7</div>
<div class="cell" style="left:685px;top:547px;letter-spacing:0.266px;">int</div>
<div class="cell" style="left:724px;top:547px;letter-spacing:0.127px;">-389214268</div>
<div class="cell" style="left:831px;top:547px;transform:scaleX(0.8639);transform-origin:0 0;">FFFFFFFFE8CD0FC4h</div>
<div class="cell" style="left:589px;top:567px;">v8</div>
<div class="cell" style="left:685px;top:567px;letter-spacing:0.266px;">int</div>
<div class="cell" style="left:724px;top:567px;letter-spacing:0.307px;">-97</div>
<div class="cell" style="left:831px;top:567px;transform:scaleX(0.8097);transform-origin:0 0;">FFFFFFFFFFFFFF9Fh</div>
<div class="cell" style="left:589px;top:587px;">v9</div>
<div class="cell" style="left:685px;top:587px;letter-spacing:0.266px;">int</div>
<div class="cell" style="left:724px;top:587px;letter-spacing:0.047px;">319796832</div>
<div class="cell" style="left:831px;top:587px;transform:scaleX(0.9591);transform-origin:0 0;">130FB660h</div>
<div class="cell" style="left:589px;top:607px;">v10</div>
<div class="cell" style="left:685px;top:607px;letter-spacing:0.266px;">int</div>
<div class="cell" style="left:724px;top:607px;letter-spacing:0.047px;">1573912574</div>
<div class="cell" style="left:831px;top:607px;transform:scaleX(0.8752);transform-origin:0 0;">5DCFFFFEh</div>
<div class="cell" style="left:589px;top:627px;letter-spacing:0.255px;">v11</div>
<div class="cell" style="left:685px;top:627px;letter-spacing:0.266px;">int</div>
<div class="cell" style="left:724px;top:627px;">0</div>
<div class="cell" style="left:831px;top:627px;">0h</div>
<div class="cell" style="left:589px;top:647px;">v12</div>
<div class="cell" style="left:685px;top:647px;letter-spacing:0.266px;">int</div>
<div class="cell" style="left:724px;top:647px;letter-spacing:0.119px;">-1077754838</div>
<div class="cell" style="left:831px;top:647px;transform:scaleX(0.8608);transform-origin:0 0;">FFFFFFFFBFC2C42Ah</div>
<div class="cell" style="left:589px;top:667px;">v13</div>
<div class="cell" style="left:685px;top:667px;letter-spacing:0.266px;">int</div>
<div class="cell" style="left:724px;top:667px;letter-spacing:0.047px;">319796704</div>
<div class="cell" style="left:831px;top:667px;transform:scaleX(0.9389);transform-origin:0 0;">130FB5E0h</div>
<div class="cell" style="left:589px;top:687px;">v14</div>
<div class="cell" style="left:685px;top:687px;letter-spacing:0.266px;">int</div>
<div class="cell" style="left:724px;top:687px;">2</div>
<div class="cell" style="left:831px;top:687px;">2h</div>
<svg style="position:absolute;left:573px;top:132px" width="10" height="8" viewBox="0 0 10 8"><path d="M1.4 2.6 L5.4 6.7 L9.5 2.6" stroke="#262626" stroke-width="1.3" fill="none"/></svg>
<svg style="position:absolute;left:575px;top:511px" width="8" height="12" viewBox="0 0 8 12"><path d="M1.6 2.5 L5.7 6.5 L1.6 10.5" stroke="#9a9a9a" stroke-width="1.4" fill="none"/></svg>
</body></html>
